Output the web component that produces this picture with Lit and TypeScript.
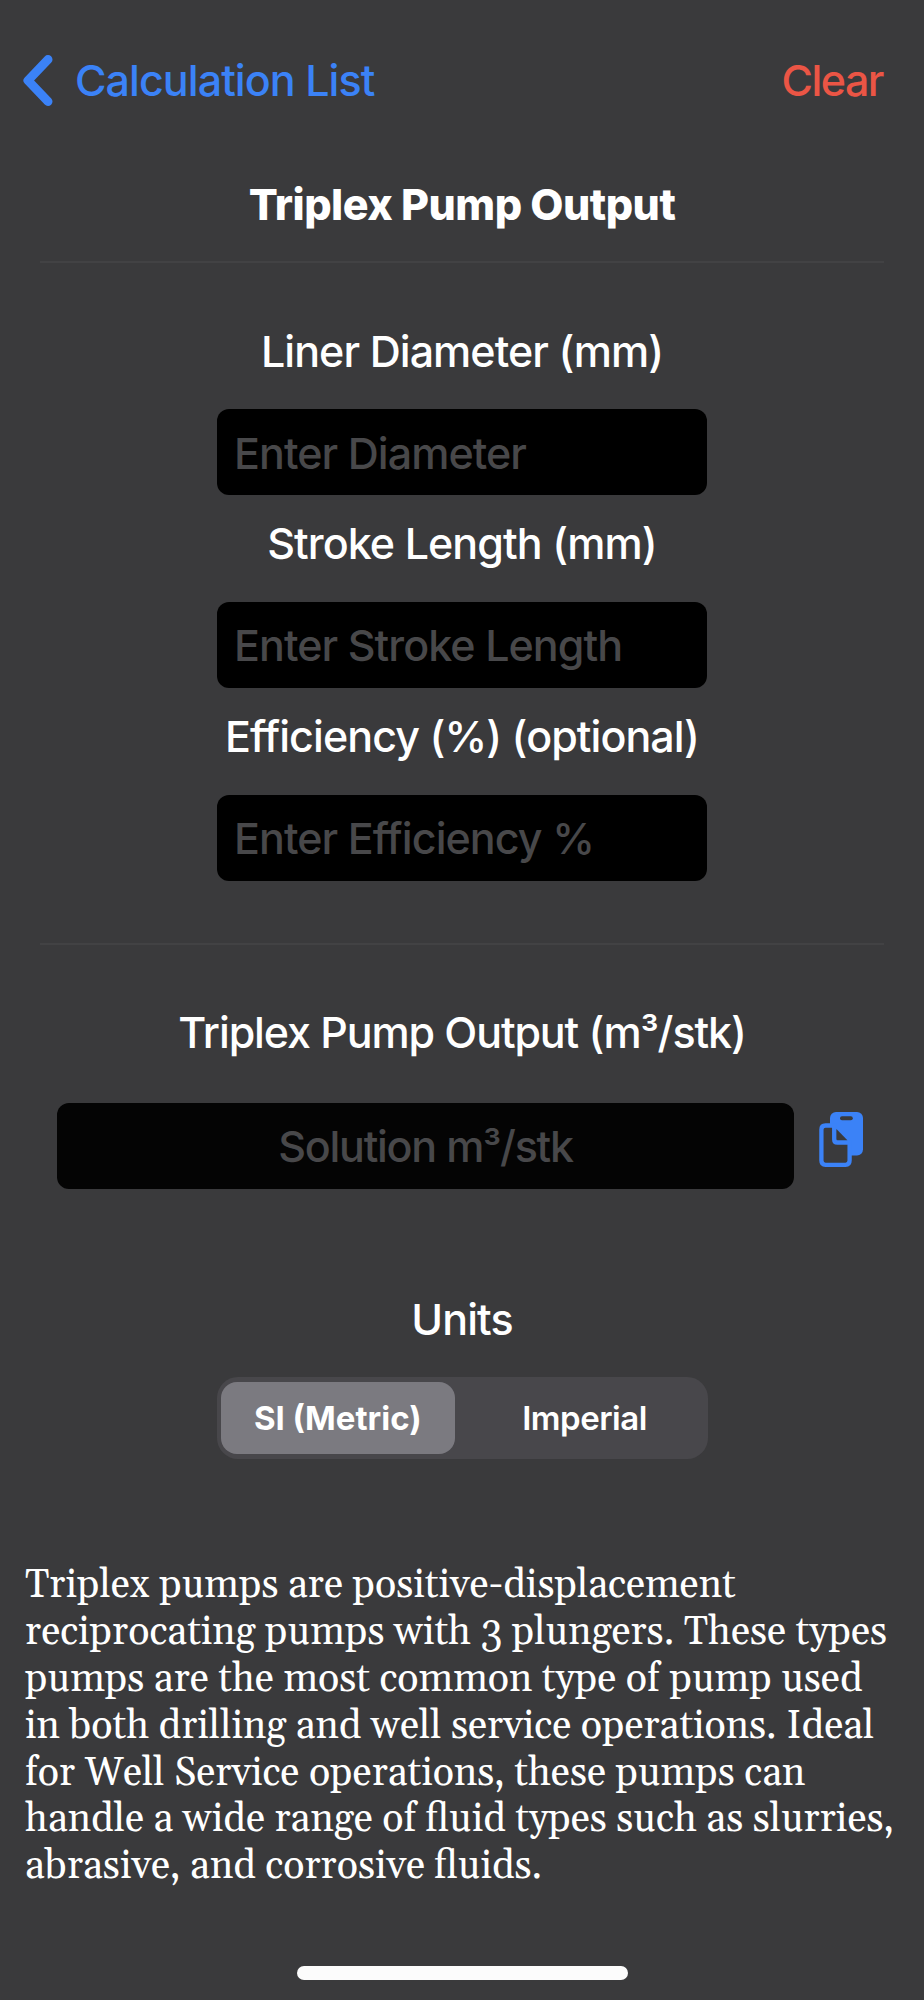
import { LitElement, html, css } from "lit";
import { customElement, property, state } from "lit/decorators.js";
import { classMap } from "lit/directives/class-map.js";

@customElement("labeled-field")
class LabeledField extends LitElement {
  @property() label = "";
  @property() hint = "";

  static styles = css`
    :host {
      display: flex;
      flex-direction: column;
      align-items: center;
    }
    .label {
      line-height: 52px;
      white-space: nowrap;
    }
    .input {
      box-sizing: border-box;
      width: 490px;
      height: 86px;
      margin: 32.7px 0 0;
      padding: 1px 16px 0 17px;
      border: 0;
      border-radius: 12px;
      outline: none;
      background: #000;
      color: #fff;
      font: inherit;
      letter-spacing: inherit;
    }
    .input::placeholder {
      color: #48484a;
      opacity: 1;
    }
  `;

  render() {
    return html`
      <label class="label" for="field">${this.label}</label>
      <input class="input" id="field" placeholder=${this.hint} />
    `;
  }
}

@customElement("app-root")
class AppRoot extends LitElement {
  @state() private unit = 0;

  static styles = css`
    :host {
      display: flex;
      flex-direction: column;
      align-items: center;
      box-sizing: border-box;
      height: 2000px;
      padding-top: 53px;
      overflow: hidden;
      background: #3a3a3c;
      color: #fff;
      font: 550 43px Inter, sans-serif;
      letter-spacing: -0.94px;
    }
    .bar {
      display: flex;
      align-items: flex-start;
      justify-content: space-between;
      align-self: stretch;
      height: 52px;
      padding: 0 41px 0 22px;
      line-height: 52px;
    }
    .back {
      display: flex;
      align-items: center;
      gap: 21px;
      color: #3b82f7;
    }
    .clear {
      padding-top: 1px;
      color: #eb5545;
      letter-spacing: -1.5px;
    }
    .title {
      margin: 73px 0 0;
      font-size: 43px;
      font-weight: 760;
      line-height: 52px;
      letter-spacing: -0.54px;
    }
    .rule {
      width: 844px;
      height: 2px;
      background: #424244;
    }
    .rule-top {
      margin-top: 31px;
    }
    .rule-bottom {
      margin-top: 62.4px;
    }
    .fields {
      display: flex;
      flex-direction: column;
      gap: 22px;
      margin-top: 61.5px;
    }
    .result-label {
      margin-top: 61px;
      line-height: 52px;
      letter-spacing: -1.12px;
      white-space: nowrap;
    }
    .cube {
      font-size: 40px;
      line-height: 0;
    }
    .result {
      display: flex;
      align-items: flex-start;
      align-self: stretch;
      gap: 25px;
      margin: 45px 0 0 57px;
    }
    .output {
      box-sizing: border-box;
      width: 737px;
      height: 86px;
      padding-top: 1px;
      border-radius: 12px;
      background: #040404;
      color: #48484a;
      line-height: 85px;
      letter-spacing: -1.26px;
      text-align: center;
    }
    .copy {
      margin-top: 9px;
    }
    .units {
      margin-top: 104px;
      line-height: 52px;
      letter-spacing: -0.9px;
    }
    .segmented {
      display: flex;
      box-sizing: border-box;
      width: 491px;
      height: 82.5px;
      margin-top: 32px;
      padding: 5px 5px 5px 4.5px;
      border-radius: 21px;
      background: #48474b;
      font-size: 33px;
      line-height: 72px;
      letter-spacing: -0.5px;
      text-align: center;
    }
    .segment {
      flex: 1;
      padding-left: 12px;
      border-radius: 16px;
      font-weight: 600;
    }
    .segment.selected {
      flex: none;
      width: 233.5px;
      padding-left: 0;
      background: #7b7a80;
      font-weight: 700;
      letter-spacing: 0;
    }
    .about {
      align-self: stretch;
      margin: 102.5px 0 0 25px;
      font: 400 39.38px/46.9px Georgia, Gelasio, "Liberation Serif", serif;
      letter-spacing: normal;
      white-space: nowrap;
    }
    .home {
      width: 331px;
      height: 13.5px;
      margin-top: 76px;
      border-radius: 7px;
      background: #fcfcfc;
    }
  `;

  render() {
    return html`
      <div class="bar">
        <div class="back">
          <svg width="32" height="54" viewBox="0 0 32 54" fill="none" stroke="#3b82f7" stroke-width="9" stroke-linecap="round" stroke-linejoin="round">
            <path d="M26 6.5 6 27.5 26 48.5" />
          </svg>
          <span>Calculation List</span>
        </div>
        <span class="clear">Clear</span>
      </div>
      <h1 class="title">Triplex Pump Output</h1>
      <div class="rule rule-top"></div>
      <div class="fields">
        <labeled-field label="Liner Diameter (mm)" hint="Enter Diameter"></labeled-field>
        <labeled-field label="Stroke Length (mm)" hint="Enter Stroke Length"></labeled-field>
        <labeled-field label="Efficiency (%) (optional)" hint="Enter Efficiency %"></labeled-field>
      </div>
      <div class="rule rule-bottom"></div>
      <div class="result-label">Triplex Pump Output (m<span class="cube">³</span>/stk)</div>
      <div class="result">
        <div class="output">Solution m<span class="cube">³</span>/stk</div>
        <svg class="copy" width="45" height="56" viewBox="0 0 45 56">
          <rect x="11" y="0" width="33" height="43.5" rx="6" fill="#3b82f7" />
          <rect x="21" y="4.3" width="12.8" height="4" rx="2" fill="#3a3a3c" />
          <path d="M6.5 13.5H15.2V27.5Q15.2 30.6 18.3 30.6H30.6V48.5Q30.6 52.8 26.5 52.8H6.5Q2.4 52.8 2.4 48.5V17.6Q2.4 13.5 6.5 13.5Z" fill="#3a3a3c" stroke="#3b82f7" stroke-width="4.3" />
          <path d="M17.4 17 28.4 28.2H18.6Q17.4 28.2 17.4 27Z" fill="#3a3a3c" />
        </svg>
      </div>
      <div class="units">Units</div>
      <div class="segmented">
        ${["SI (Metric)", "Imperial"].map(
          (name, i) => html`<div
            class=${classMap({ segment: true, selected: this.unit === i })}
            @click=${() => (this.unit = i)}
          >${name}</div>`
        )}
      </div>
      <div class="about">
        Triplex pumps are positive-displacement<br />
        reciprocating pumps with 3 plungers. These types<br />
        pumps are the most common type of pump used<br />
        in both drilling and well service operations. Ideal<br />
        for Well Service operations, these pumps can<br />
        handle a wide range of fluid types such as slurries,<br />
        abrasive, and corrosive fluids.
      </div>
      <div class="home"></div>
    `;
  }
}
